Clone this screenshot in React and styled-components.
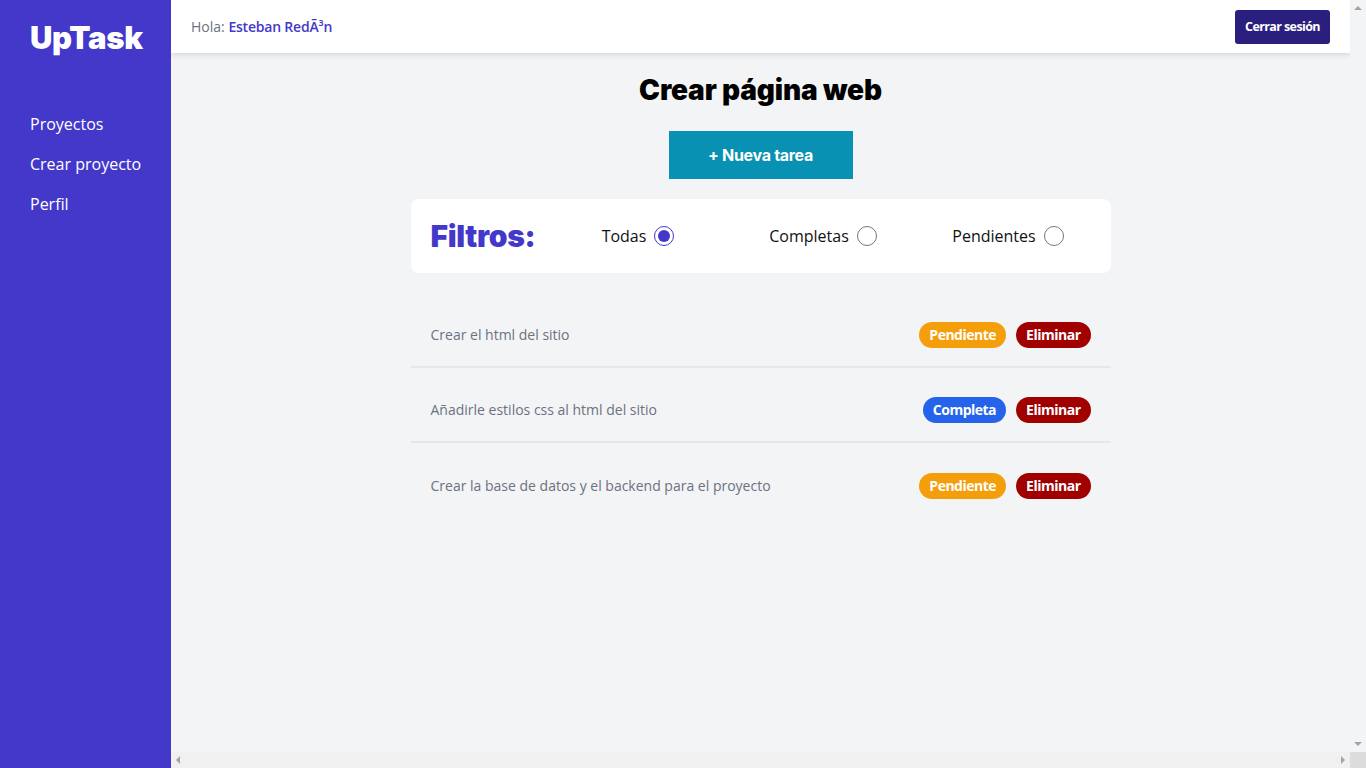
import React, { useState } from 'react';
import styled, { createGlobalStyle } from 'styled-components';

const GlobalStyle = createGlobalStyle`
  * { box-sizing: border-box; }
  html, body { margin: 0; padding: 0; height: 100%; overflow: hidden; }
  body { font-family: "Open Sans", "Noto Sans", sans-serif; background: #f3f4f6; }
  #root { height: 100%; }
`;

const Layout = styled.div`
  display: flex;
  height: 100vh;
`;

const Sidebar = styled.aside`
  width: 171px;
  flex-shrink: 0;
  background: #4338ca;
  padding: 20px 0 20px 30px;
`;

const Logo = styled.h1`
  margin: 0;
  font-family: Inter, sans-serif;
  font-weight: 900;
  font-size: 31px;
  line-height: 36px;
  color: #fff;
  letter-spacing: -0.3px;
`;

const Nav = styled.nav`
  display: flex;
  flex-direction: column;
  gap: 16px;
  margin-top: 56px;
`;

const NavLink = styled.a`
  color: #fff;
  font-size: 16px;
  line-height: 24px;
  white-space: nowrap;
  text-decoration: none;
  cursor: pointer;
`;

/* main pane with its classic scrollbars drawn around the viewport */
const Main = styled.main`
  flex: 1;
  display: grid;
  grid-template-columns: 1fr 16px;
  grid-template-rows: 1fr 16px;
  background: #f3f4f6;
  min-width: 0;
`;

const Viewport = styled.div`
  overflow: hidden;
  min-width: 0;
`;

const ScrollTrack = styled.div`
  display: flex;
  flex-direction: ${(p) => (p.$vertical ? 'column' : 'row')};
  align-items: center;
  justify-content: space-between;
  padding: ${(p) => (p.$vertical ? '6px 0' : '0 5px')};
  background: ${(p) => (p.$vertical ? '#f3f4f6' : '#f0f0f0')};
`;

const Arrow = styled.span`
  width: 0;
  height: 0;
  border: 4px solid transparent;
  ${(p) => p.$dir === 'up' && 'border-bottom: 4px solid #a3a3a3; border-top-width: 0;'}
  ${(p) => p.$dir === 'down' && 'border-top: 4px solid #a3a3a3; border-bottom-width: 0;'}
  ${(p) => p.$dir === 'left' && 'border-right: 4px solid #a3a3a3; border-left-width: 0;'}
  ${(p) => p.$dir === 'right' && 'border-left: 4px solid #a3a3a3; border-right-width: 0;'}
`;

const ScrollCorner = styled.div`
  background: #dcdcdc;
`;

const Header = styled.header`
  display: flex;
  align-items: center;
  justify-content: space-between;
  height: 53px;
  padding: 0 20px;
  background: #fff;
  box-shadow: 0 2px 6px rgba(0, 0, 0, 0.12);
`;

const Greeting = styled.p`
  margin: 0;
  font-size: 14px;
  color: #6b7280;
`;

const UserName = styled.span`
  color: #4338ca;
  font-weight: 600;
  letter-spacing: -0.2px;
`;

const LogoutButton = styled.button`
  height: 34px;
  padding: 0 10px;
  border: none;
  border-radius: 3px;
  background: #2a1f7d;
  color: #fff;
  font-family: "Open Sans", sans-serif;
  font-weight: 700;
  font-size: 12.5px;
  letter-spacing: -0.6px;
  cursor: pointer;
`;

const Content = styled.div`
  width: 700px;
  margin: 0 auto;
  padding-top: 20px;
  display: flex;
  flex-direction: column;
  align-items: center;
`;

const Title = styled.h2`
  margin: 0;
  font-family: Inter, sans-serif;
  font-weight: 900;
  font-size: 28px;
  line-height: 34px;
  color: #000;
  letter-spacing: -0.15px;
`;

const NewTaskButton = styled.button`
  margin-top: 24px;
  width: 184px;
  height: 48px;
  border: none;
  background: #0891b2;
  color: #fff;
  font-family: Inter, sans-serif;
  font-weight: 700;
  font-size: 16px;
  letter-spacing: -0.3px;
  cursor: pointer;
`;

const FilterBox = styled.div`
  margin-top: 20px;
  width: 100%;
  height: 74px;
  background: #fff;
  border-radius: 8px;
  padding: 0 20px;
  display: grid;
  grid-template-columns: 115px repeat(3, 185px);
  align-items: center;
`;

const FilterTitle = styled.h3`
  margin: 0;
  font-family: Inter, sans-serif;
  font-weight: 900;
  font-size: 30px;
  color: #4338ca;
  letter-spacing: -0.3px;
`;

const FilterOption = styled.label`
  display: flex;
  align-items: center;
  justify-content: center;
  gap: 8px;
  font-size: 16px;
  color: #111;
  cursor: pointer;
`;

const Radio = styled.input`
  margin: 0;
  width: 20px;
  height: 20px;
  accent-color: #4338ca;
  cursor: pointer;
`;

const TaskList = styled.ul`
  list-style: none;
  margin: 20px 0 0;
  padding: 0;
  width: 100%;
`;

const TaskRow = styled.li`
  display: flex;
  align-items: center;
  justify-content: space-between;
  height: 75px;
  padding: 10px 20px 0;
  border-bottom: ${(p) => (p.$last ? 'none' : '2px solid #e5e7eb')};
`;

const TaskText = styled.p`
  margin: 0;
  font-size: 14px;
  color: #6b7280;
`;

const Actions = styled.div`
  display: flex;
  gap: 10px;
`;

const Badge = styled.button`
  height: 26px;
  padding: 0 10px;
  border: none;
  border-radius: 999px;
  font-family: "Open Sans", sans-serif;
  font-weight: 700;
  font-size: 14px;
  color: #fff;
  letter-spacing: -0.5px;
  cursor: pointer;
  background: ${(p) => {
    switch (p.$variant) {
      case 'pending':
        return '#f59e0b';
      case 'done':
        return '#2563eb';
      default:
        return '#a00000';
    }
  }};
`;

const tasks = [
  { id: 1, text: 'Crear el html del sitio', done: false },
  { id: 2, text: 'Añadirle estilos css al html del sitio', done: true },
  { id: 3, text: 'Crear la base de datos y el backend para el proyecto', done: false },
];

const filters = ['Todas', 'Completas', 'Pendientes'];

export default function App() {
  const [filter, setFilter] = useState('Todas');

  return (
    <>
      <GlobalStyle />
      <Layout>
        <Sidebar>
          <Logo>UpTask</Logo>
          <Nav>
            <NavLink>Proyectos</NavLink>
            <NavLink>Crear proyecto</NavLink>
            <NavLink>Perfil</NavLink>
          </Nav>
        </Sidebar>
        <Main>
          <Viewport>
            <Header>
              <Greeting>
                Hola: <UserName>Esteban RedÃ³n</UserName>
              </Greeting>
              <LogoutButton>Cerrar sesión</LogoutButton>
            </Header>
            <Content>
              <Title>Crear página web</Title>
              <NewTaskButton>+ Nueva tarea</NewTaskButton>
              <FilterBox>
                <FilterTitle>Filtros:</FilterTitle>
                {filters.map((f) => (
                  <FilterOption key={f}>
                    {f}
                    <Radio
                      type="radio"
                      name="filtro"
                      checked={filter === f}
                      onChange={() => setFilter(f)}
                    />
                  </FilterOption>
                ))}
              </FilterBox>
              <TaskList>
                {tasks.map((t, i) => (
                  <TaskRow key={t.id} $last={i === tasks.length - 1}>
                    <TaskText>{t.text}</TaskText>
                    <Actions>
                      <Badge $variant={t.done ? 'done' : 'pending'}>
                        {t.done ? 'Completa' : 'Pendiente'}
                      </Badge>
                      <Badge $variant="delete">Eliminar</Badge>
                    </Actions>
                  </TaskRow>
                ))}
              </TaskList>
            </Content>
          </Viewport>
          <ScrollTrack $vertical>
            <Arrow $dir="up" />
            <Arrow $dir="down" />
          </ScrollTrack>
          <ScrollTrack>
            <Arrow $dir="left" />
            <Arrow $dir="right" />
          </ScrollTrack>
          <ScrollCorner />
        </Main>
      </Layout>
    </>
  );
}
